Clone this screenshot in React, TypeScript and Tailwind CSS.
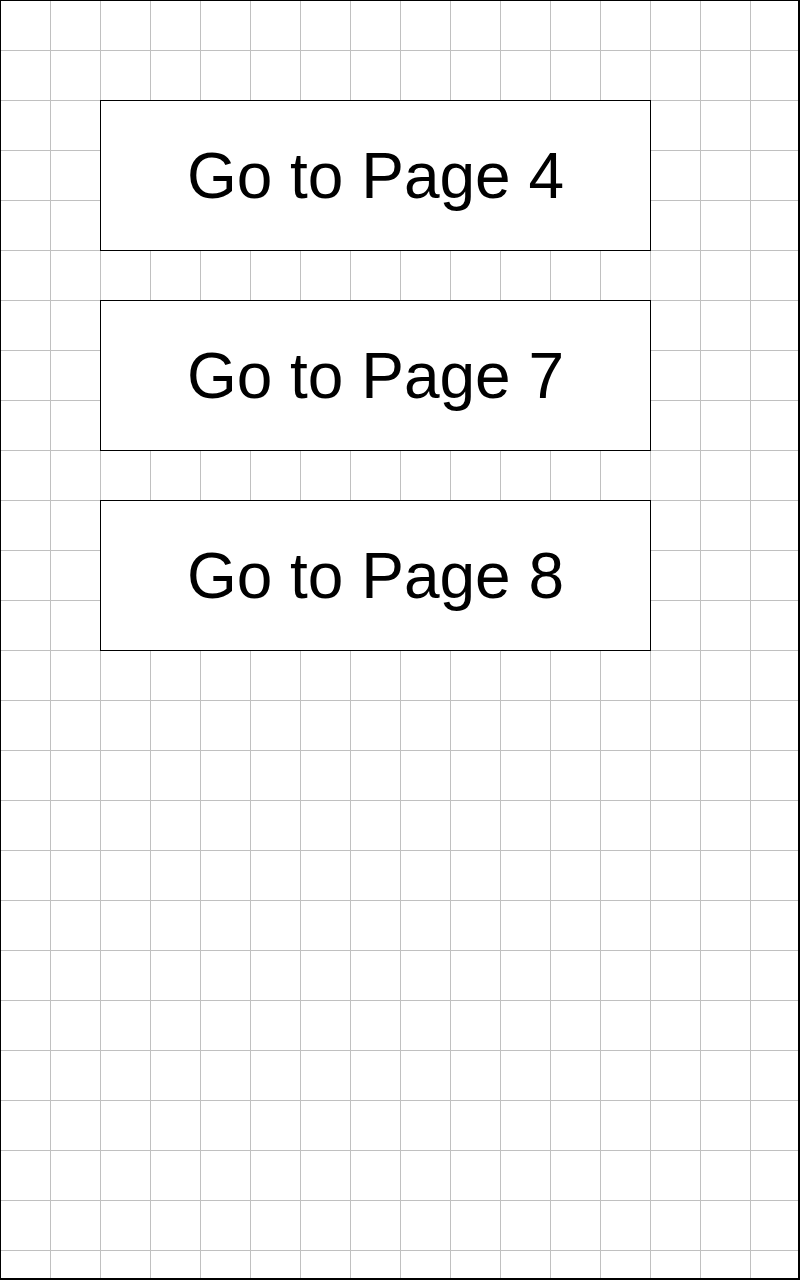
const pages = [4, 7, 8]

export default function App() {
  return (
    <div className="w-[800px] h-[1280px] box-border border-t border-l border-r-2 border-b-2 border-black bg-white bg-origin-border bg-[linear-gradient(to_right,#c0c0c0_1px,transparent_1px),linear-gradient(to_bottom,#c0c0c0_1px,transparent_1px)] bg-[size:50px_50px] pt-[99px] pl-[99px]">
      <div className="flex flex-col gap-[49px]">
        {pages.map(page => (
          <button
            key={page}
            className="w-[551px] h-[151px] box-border border border-black bg-white flex items-center justify-center text-black text-[64px] leading-none font-['Liberation_Sans',Arial,sans-serif]"
          >
            Go to Page {page}
          </button>
        ))}
      </div>
    </div>
  )
}
